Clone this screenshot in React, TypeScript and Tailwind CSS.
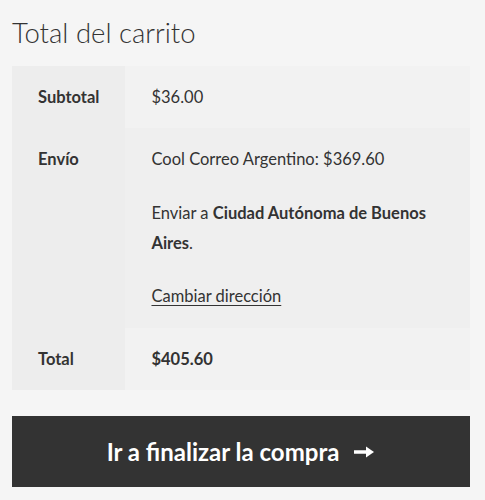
import React from "react";

export default function App() {
  return (
    <div
      className="w-[485px] h-[500px] bg-[#f5f5f5] text-[#333333] overflow-hidden"
      style={{ fontFamily: "Lato, 'Open Sans', sans-serif" }}
    >
      <div className="pl-[12px] pr-[15px]">
        <h2 className="text-[27.5px] font-light leading-[36px] pt-[15px] pb-[15px] text-[#333333]">
          Total del carrito
        </h2>
        <table className="w-full border-collapse text-[16.5px] leading-[30px]">
          <tbody>
            <tr>
              <th className="w-[113px] bg-[#ededed] text-left font-bold px-[26px] py-[16px] align-top">
                Subtotal
              </th>
              <td className="bg-[#f2f2f2] px-[26px] py-[16px] align-top">$36.00</td>
            </tr>
            <tr>
              <th className="bg-[#ededed] text-left font-bold px-[26px] py-[16px] align-top">
                Envío
              </th>
              <td className="bg-[#efefef] px-[26px] py-[16px] align-top">
                <p>Cool Correo Argentino: $369.60</p>
                <p className="mt-[24px]">
                  Enviar a <strong className="font-bold">Ciudad Autónoma de Buenos Aires</strong>.
                </p>
                <p className="mt-[23px] mb-[1px]">
                  <a href="#" className="underline underline-offset-[3px]">
                    Cambiar dirección
                  </a>
                </p>
              </td>
            </tr>
            <tr>
              <th className="bg-[#ededed] text-left font-bold px-[26px] py-[16px] align-top">
                Total
              </th>
              <td className="bg-[#f2f2f2] px-[26px] py-[16px] align-top font-bold">$405.60</td>
            </tr>
          </tbody>
        </table>
        <a
          href="#"
          className="mt-[26px] flex items-center justify-center gap-[14px] h-[71px] bg-[#333333] text-white text-[24px] font-bold"
        >
          <span>Ir a finalizar la compra</span>
          <svg width="22" height="14" viewBox="0 0 22 14" fill="none">
            <path d="M1 7h15" stroke="white" strokeWidth="3.5" />
            <path d="M13 1.5l8 5.5-8 5.5z" fill="white" />
          </svg>
        </a>
      </div>
    </div>
  );
}
